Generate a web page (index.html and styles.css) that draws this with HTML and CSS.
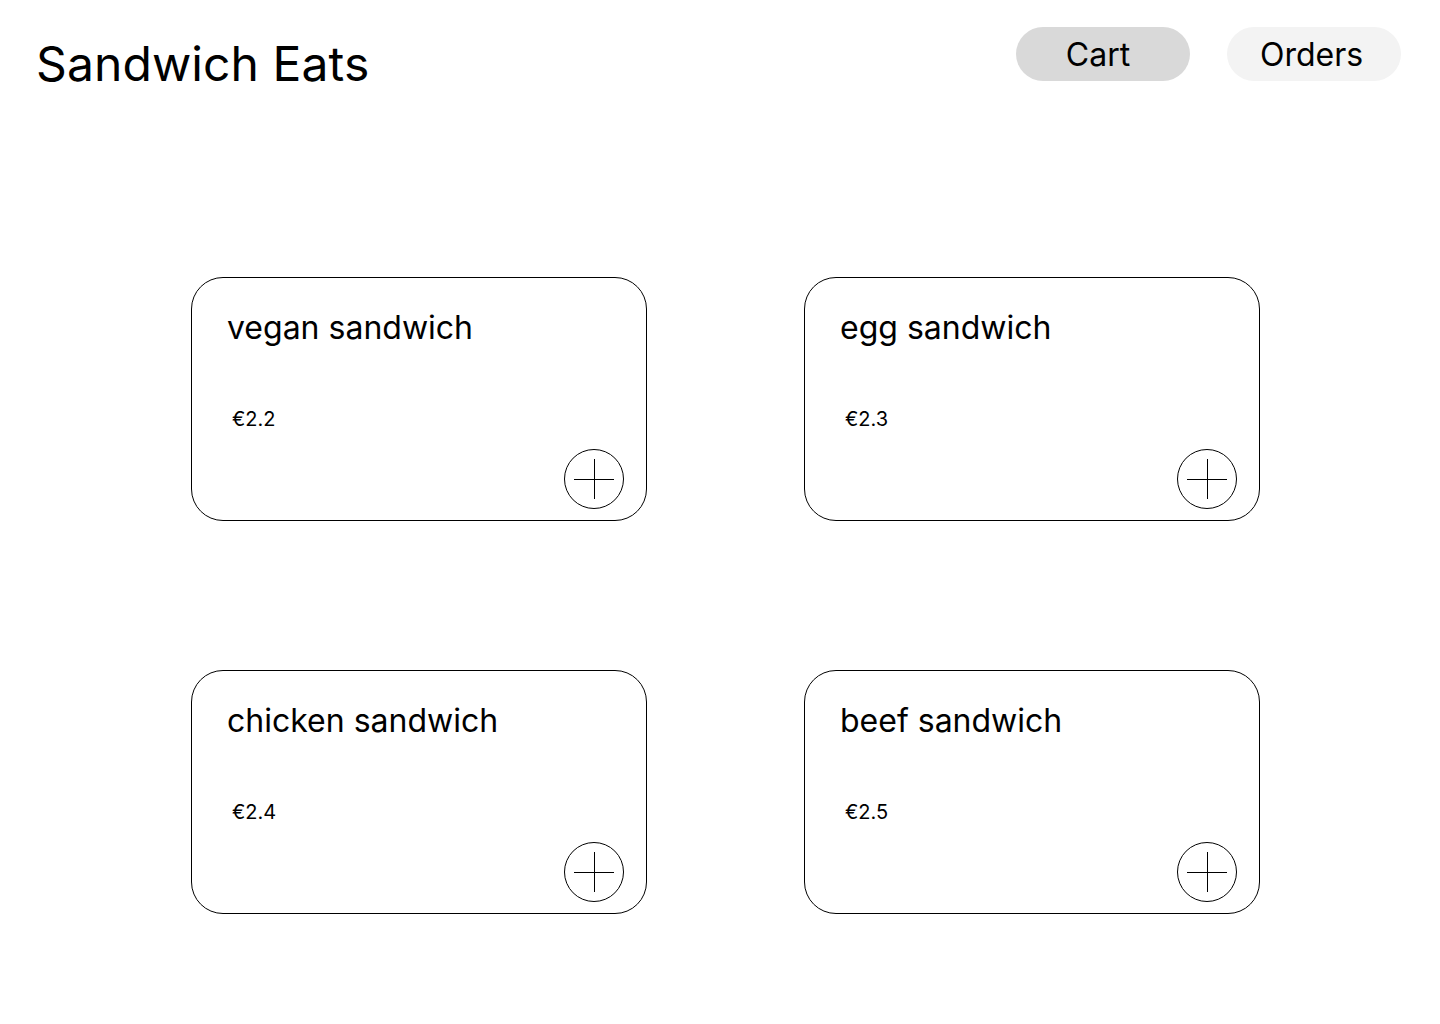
FILE: index.html
```html
<!DOCTYPE html>
<html lang="en">
<head>
<meta charset="utf-8">
<title>Sandwich Eats</title>
<link rel="stylesheet" href="styles.css">
</head>
<body>
<header class="header">
  <h1 class="brand">Sandwich Eats</h1>
  <nav class="nav">
    <button class="pill pill-cart">Cart</button>
    <button class="pill pill-orders">Orders</button>
  </nav>
</header>
<main class="grid">
  <div class="card">
    <div class="card-title">vegan sandwich</div>
    <div class="card-price">€2.2</div>
    <button class="add" aria-label="Add"><svg width="40" height="40" viewBox="0 0 40 40"><path d="M0 20.5H40M20.5 0V40" stroke="#000" stroke-width="1" fill="none"/></svg></button>
  </div>
  <div class="card">
    <div class="card-title">egg sandwich</div>
    <div class="card-price">€2.3</div>
    <button class="add" aria-label="Add"><svg width="40" height="40" viewBox="0 0 40 40"><path d="M0 20.5H40M20.5 0V40" stroke="#000" stroke-width="1" fill="none"/></svg></button>
  </div>
  <div class="card">
    <div class="card-title">chicken sandwich</div>
    <div class="card-price">€2.4</div>
    <button class="add" aria-label="Add"><svg width="40" height="40" viewBox="0 0 40 40"><path d="M0 20.5H40M20.5 0V40" stroke="#000" stroke-width="1" fill="none"/></svg></button>
  </div>
  <div class="card">
    <div class="card-title">beef sandwich</div>
    <div class="card-price">€2.5</div>
    <button class="add" aria-label="Add"><svg width="40" height="40" viewBox="0 0 40 40"><path d="M0 20.5H40M20.5 0V40" stroke="#000" stroke-width="1" fill="none"/></svg></button>
  </div>
</main>
</body>
</html>
```

FILE: styles.css
```css
* { box-sizing: border-box; }
html, body { margin: 0; padding: 0; background: #fff; }
body {
  font-family: Inter, "Noto Sans", sans-serif;
  color: #000;
  width: 1440px;
  height: 1024px;
  overflow: hidden;
}
.header {
  display: flex;
  justify-content: space-between;
  align-items: flex-start;
  padding: 27px 39px 0 36px;
}
.brand {
  margin: 0;
  padding-top: 8px;
  font-size: 48px;
  font-weight: 400;
  line-height: 58px;
  letter-spacing: 0.1px;
}
.nav {
  display: flex;
  gap: 37px;
}
.pill {
  width: 174px;
  height: 54px;
  border: none;
  border-radius: 27px;
  font-family: inherit;
  font-size: 32px;
  color: #000;
  padding: 2px 0 0 0;
  line-height: 52px;
}
.pill-cart { background: #d9d9d9; padding-right: 10px; }
.pill-orders { background: #f3f3f3; padding-right: 5px; }
.grid {
  display: grid;
  grid-template-columns: 456px 456px;
  grid-auto-rows: 244px;
  column-gap: 157px;
  row-gap: 149px;
  padding: 184px 0 0 191px;
}
.card {
  border: 1px solid #000;
  border-radius: 32px;
  display: flex;
  flex-direction: column;
  padding: 31px 22px 11px 35px;
}
.card-title {
  font-size: 32px;
  line-height: 38px;
}
.card-price {
  margin-top: 60px;
  padding-left: 5px;
  font-size: 20px;
  line-height: 24px;
}
.add {
  margin-top: auto;
  align-self: flex-end;
  width: 60px;
  height: 60px;
  border: 1px solid #000;
  border-radius: 50%;
  background: #fff;
  padding: 0;
  display: flex;
  align-items: center;
  justify-content: center;
}
.add svg { display: block; }
```
